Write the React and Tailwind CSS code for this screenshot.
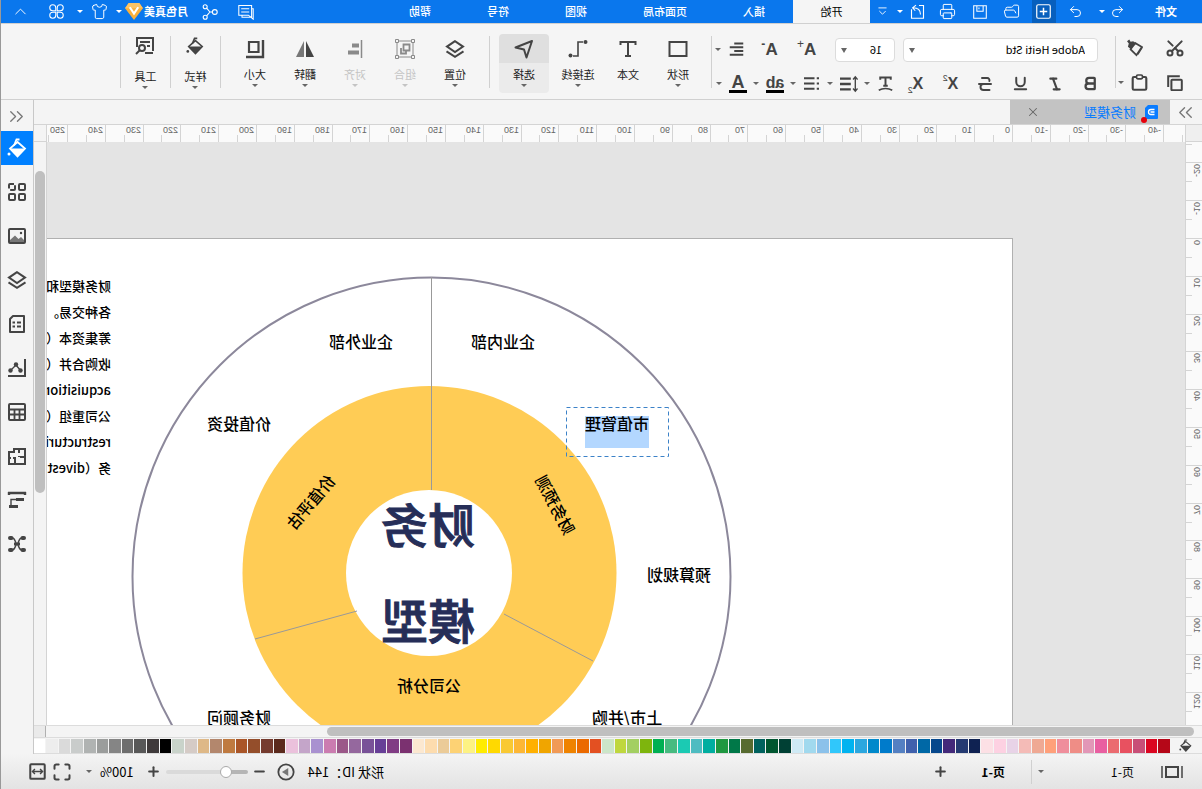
import React from 'react';
import {
    Bold,
    ChevronsLeft,
    ChevronsRight,
    ChevronUp,
    FolderOpen,
    Italic,
    Maximize,
    Minus,
    Plus,
    Printer,
    Redo2,
    Scissors,
    Shirt,
    Strikethrough,
    Underline,
    Undo2,
    X,
} from 'lucide-react';

const PALETTE = [
    '#b50718', '#db0620', '#c84f77', '#e85160', '#eb6b70', '#e95fa1', '#e297b7', '#ef8d86', '#ef8e9c', '#ffa07a',
    '#efa994', '#f4bbb7', '#e8d3e7', '#fdd1e2', '#fce0e5', '#0f2252', '#253a72', '#43297a', '#06478c', '#0068a6',
    '#4061ad', '#5480c2', '#007bcb', '#0089cb', '#2ba7df', '#00b3f0', '#30c7fb', '#8bc1ea', '#a1d9ee', '#cfeaf5',
    '#004034', '#005630', '#00625e', '#576b30', '#007848', '#1f9841', '#00aea0', '#4ebcc1', '#1bcab3', '#47bb80',
    '#00b053', '#7eb50d', '#a3cf62', '#bfd73e', '#cce6c9', '#e35022', '#eb6a00', '#ef8300', '#f19a56', '#f0a500',
    '#ffb000', '#fdb735', '#f9c933', '#ffd900', '#ffec00', '#fdf283', '#fdd274', '#ebcb98', '#fddcae', '#fce8d0',
    '#7b3170', '#803c84', '#673f97', '#795298', '#95689e', '#9b5889', '#cb7cb0', '#a991d0', '#c4a5c9', '#ebc1dc',
    '#5b2a1d', '#753b2f', '#944e2b', '#aa5628', '#bf7a40', '#b3876d', '#deb887', '#d5cbc6', '#c9d3ca', '#000000',
    '#3f3a3b', '#585858', '#6e6e6e', '#858585', '#9b9d9c', '#b0b3b2', '#c9cccb', '#dadada', '#ededed', '#ffffff',
];

const MENU = ['插入', '页面布局', '视图', '符号', '帮助'];

const NOTES = ['财务模型和', '各种交易。', '筹集资本（', '收购合并（', 'acquisition', '公司重组（', 'restructurin', '务（divest'];

const LABELS = [
    { text: '企业内部', x: 509, y: 109 },
    { text: '企业外部', x: 651, y: 109 },
    { text: '价值投资', x: 773, y: 191 },
    { text: '市值管理', x: 395, y: 191 },
    { text: '预算规划', x: 333, y: 342 },
    { text: '上市/并购', x: 385, y: 485 },
    { text: '财务顾问', x: 773, y: 485 },
    { text: '公司分析', x: 583, y: 453 },
];

// pixels per ruler unit
const RULER_SCALE = 3.78;

const Svg = ({ size = 20, className = '', children }) => (
    <svg width={size} height={size} viewBox="0 0 20 20" fill="none" stroke="currentColor" strokeWidth="2" className={className} aria-hidden="true">
        {children}
    </svg>
);

const Caret = ({ className = 'text-[#666]' }) => (
    <svg width="6" height="3" viewBox="0 0 6 3" className={`shrink-0 ${className}`} aria-hidden="true">
        <path d="M0 0h6L3 3z" fill="currentColor" />
    </svg>
);

const BucketIcon = ({ size }) => (
    <Svg size={size}>
        <path d="M9.5 4 2 10.5l7.5 8 7.5-8z" strokeWidth="1.8" />
        <path d="M2 10.5h15l-7.5 8z" fill="currentColor" stroke="none" />
        <path d="M7.5 1.5h3l2.5 6" strokeWidth="1.8" />
        <circle cx="18" cy="16" r="1.5" fill="currentColor" stroke="none" />
    </Svg>
);

const LayersIcon = () => (
    <Svg>
        <path d="M10 2.2 18 7.6 10 13 2 7.6z" />
        <path d="m1.5 12.4 8.5 5.4 8.5-5.4" />
    </Svg>
);

const SIDE_TOOLS = [
    { name: '样式', icon: <BucketIcon size={20} />, active: true },
    {
        name: '符号库',
        icon: (
            <Svg>
                <rect x="2" y="2" width="6" height="6" rx="1" />
                <rect x="12" y="2" width="6" height="6" rx="1" strokeDasharray="9 2" />
                <rect x="2" y="12" width="6" height="6" rx="1" />
                <rect x="12" y="12" width="6" height="6" rx="1" />
            </Svg>
        ),
    },
    {
        name: '图片',
        icon: (
            <Svg>
                <rect x="2" y="3" width="16" height="14" rx="1" />
                <path d="M3 16v-2l3-3 2.500 2L12 9.500l5 4.500v2z" fill="#777" stroke="none" />
                <circle cx="6" cy="7" r="1.200" fill="currentColor" stroke="none" />
            </Svg>
        ),
    },
    { name: '图层', icon: <LayersIcon /> },
    {
        name: '文档',
        icon: (
            <Svg>
                <path d="M3 2h11l3 3v13H3z" strokeLinejoin="round" />
                <path d="M6 8.500h4M12 8.500h2.500M6 12.500h4M12 12.500h2.500" />
            </Svg>
        ),
    },
    {
        name: '图表',
        icon: (
            <Svg>
                <path d="M2 1v17h17" />
                <path d="m6 13 5-6 6 6" strokeWidth="1.400" />
                <g fill="currentColor" stroke="none">
                    <circle cx="6.500" cy="12.500" r="2.200" />
                    <circle cx="11" cy="6.500" r="2.200" />
                    <circle cx="16.500" cy="12.500" r="2.200" />
                </g>
            </Svg>
        ),
    },
    {
        name: '表格',
        icon: (
            <Svg>
                <rect x="2" y="2" width="16" height="16" rx="1" />
                <path d="M2 7.500h16M2 12.500h16M7.500 7.500V18M12.500 7.500V18" strokeWidth="1.800" />
            </Svg>
        ),
    },
    {
        name: '平面图',
        icon: (
            <Svg>
                <path d="M2 3h11v3h5v12H2zM8 3v4M2 11h5M12 18v-6h2M8 10v1M16 12h2" />
            </Svg>
        ),
    },
    {
        name: '组织结构',
        icon: (
            <Svg>
                <path d="M1 3h18M2 2v3M18 2v3" strokeWidth="2.400" />
                <path d="M5 9.500h11v6" strokeWidth="1.400" />
                <path d="M3 9.500h8M9 16.500h9" strokeWidth="3" />
            </Svg>
        ),
    },
    {
        name: '思维导图',
        icon: (
            <Svg>
                <path d="M5 4c4 0 3 6 5 6s1-6 5-6M5 16c4 0 3-6 5-6s1 6 5 6" strokeWidth="1.400" />
                <path d="M3 4h1.500M15.500 4H17M3 16h1.500M15.500 16H17" strokeWidth="4" strokeLinecap="round" />
                <path d="M7 10h6" strokeWidth="3" />
            </Svg>
        ),
    },
];

const ARRANGE_TOOLS = [
    { name: '位置', icon: <LayersIcon /> },
    {
        name: '组合',
        disabled: true,
        icon: (
            <Svg>
                <g strokeWidth="1">
                    <path d="M2 2h16v16H2z" />
                    <path d="M.5.5h3v3h-3zM16.500.5h3v3h-3zM.5 16.500h3v3h-3zM16.500 16.500h3v3h-3z" fill="#f5f5f5" />
                </g>
                <path d="M5.500 5.500h6v6h-6zM14 9v5.500H9V12" strokeWidth="1.800" />
            </Svg>
        ),
    },
    {
        name: '对齐',
        disabled: true,
        icon: (
            <Svg>
                <path d="M3.500 1v18" strokeWidth="1.500" />
                <path d="M6 6.500h7M6 13.500h11" strokeWidth="4" />
            </Svg>
        ),
    },
    {
        name: '翻转',
        icon: (
            <Svg>
                <path d="M9 2v16H1z" fill="currentColor" stroke="none" />
                <path d="M11 2v16h8z" fill="#777" stroke="none" />
            </Svg>
        ),
    },
    {
        name: '大小',
        icon: (
            <Svg>
                <path d="M6.500 3h9.500v10H6.500z" strokeWidth="2.200" />
                <path d="M2 1v17h17" strokeWidth="2.400" />
            </Svg>
        ),
    },
];

const ToolButton = ({ name, icon, disabled = false, active = false, caret = true, low = false }) => (
    <button
        type="button"
        disabled={disabled}
        className={`flex h-[59px] shrink-0 flex-col items-center rounded-sm text-[#444] ${low ? 'w-[49px]' : 'w-[50px]'} ${active ? 'bg-[linear-gradient(#dfdfdf_29px,#ebebeb_29px)]' : ''}`}
    >
        <span className={`flex items-center justify-center ${low ? 'h-7' : 'h-[30px]'} ${disabled ? 'text-[#8a8a8a]' : ''}`}>{icon}</span>
        <span className={`leading-5 whitespace-nowrap ${low ? 'mt-1.5' : ''} ${disabled ? 'text-[#c4c4c4]' : 'text-[#222]'}`}>{name}</span>
        {caret ? <Caret className={disabled ? 'text-[#c4c4c4]' : 'text-[#666]'} /> : null}
    </button>
);

const Divider = () => <div className="h-[52px] w-px shrink-0 bg-[#d0d0d0]" />;

const IconButton = ({ label, className = 'w-[35px]', children }) => (
    <button type="button" aria-label={label} className={`flex h-6 shrink-0 items-center justify-center ${className}`}>
        {children}
    </button>
);

// icon with its own drop-down arrow
const SplitButton = ({ label, children }) => (
    <button type="button" aria-label={label} className="flex h-6 w-[37px] shrink-0 items-center">
        <span className="flex w-6 justify-center">{children}</span>
        <Caret className="ml-1 text-[#666]" />
    </button>
);

const SelectBox = ({ label, value, className }) => (
    <div className={`relative flex ${className}`}>
        <select
            aria-label={label}
            defaultValue={value}
            className="h-6 w-full appearance-none rounded-sm border border-[#dcdcdc] bg-white px-3 text-[11px] text-black"
        >
            <option>{value}</option>
        </select>
        <svg width="6" height="5" viewBox="0 0 6 5" className="pointer-events-none absolute top-[10px] right-[6px]" aria-hidden="true">
            <path d="M0 0h6L3 5z" fill="#666" />
        </svg>
    </div>
);

const TitleBar = () => (
    <header className="flex h-[23px] shrink-0 items-center bg-[#0a77ed] text-white">
        <button type="button" className="w-[72px] font-bold">文件</button>
        <IconButton label="撤销" className="w-6"><Undo2 size={15} strokeWidth={1.6} /></IconButton>
        <Caret className="mx-px text-white" />
        <IconButton label="重做" className="ml-2.5 w-6"><Redo2 size={15} strokeWidth={1.6} /></IconButton>
        <IconButton label="新建" className="ml-2 w-6 bg-[#075fbd]">
            <Svg size={15}>
                <rect x="1" y="1" width="18" height="18" rx="2" strokeWidth="1.600" />
                <path d="M10 5v10M5 10h10" />
            </Svg>
        </IconButton>
        <IconButton label="打开" className="ml-1 w-8"><FolderOpen size={17} strokeWidth={1.4} /></IconButton>
        <IconButton label="保存" className="w-8">
            <Svg size={14}>
                <path d="M1 1h18v18H1zM5.500 1v8h9V1M11.500 3.500V6" strokeWidth="1.500" />
            </Svg>
        </IconButton>
        <IconButton label="打印" className="w-8"><Printer size={17} strokeWidth={1.4} /></IconButton>
        <IconButton label="导出" className="w-7">
            <Svg size={15}>
                <path d="M8 2H2v17h16V7" strokeWidth="1.500" />
                <path d="M6 14c0-6 4-9 10-9M12 1.500 16.500 5 13 9" strokeWidth="1.500" />
            </Svg>
        </IconButton>
        <Caret className="mx-px text-white" />
        <IconButton label="更多" className="w-[26px]">
            <Svg size={9}>
                <path d="M1 2h18M3 9l7 7 7-7" />
            </Svg>
        </IconButton>
        <nav className="flex h-full">
            <button type="button" className="w-[77px] bg-[#f5f5f5] text-black">开始</button>
            {MENU.map((item) => (
                <button key={item} type="button" className="px-7 font-medium whitespace-nowrap">{item}</button>
            ))}
        </nav>
        <div className="ml-auto flex items-center">
            <IconButton label="评论" className="w-9">
                <Svg size={16}>
                    <path d="M3 2h16v12H7l-4 3zM3 6H1v13l3-2.500h11V14M6 6h10M6 10h10" strokeWidth="1.300" />
                </Svg>
            </IconButton>
            <IconButton label="分享" className="w-9">
                <Svg size={16}>
                    <g strokeWidth="1.400">
                        <circle cx="4" cy="10" r="3" />
                        <circle cx="16" cy="3.500" r="2.500" />
                        <circle cx="16" cy="16.500" r="2.500" />
                        <path d="M7 10h3l4-4.500M10 10l4 4.500" />
                    </g>
                </Svg>
            </IconButton>
            <button type="button" className="ml-1 flex items-center font-bold whitespace-nowrap">
                月色真美
                <svg width="20" height="19" viewBox="0 0 18 18" aria-hidden="true">
                    <path d="M4 1h10l3.500 5L9 17 .5 6z" fill="#fbb03b" />
                    <path d="M4 1h10l3.500 5H.5z" fill="#fdc465" />
                    <path d="m5 5 4 6 4-6" fill="none" stroke="#fff" strokeWidth="2" />
                </svg>
            </button>
            <Caret className="mr-1 ml-0.5 text-white" />
            <IconButton label="主题" className="mr-px w-6"><Shirt size={17} strokeWidth={1.4} /></IconButton>
            <Caret className="mx-1 text-white" />
            <IconButton label="应用" className="w-8">
                <Svg size={15}>
                    <g strokeWidth="1.400">
                        <path d="M9 9H5a4 4 0 1 1 4-4zM11 9V5a4 4 0 1 1 4 4zM9 11v4a4 4 0 1 1-4-4zM11 11h4a4 4 0 1 1-4 4z" />
                    </g>
                </Svg>
            </IconButton>
            <IconButton label="收起" className="w-10"><ChevronUp size={19} strokeWidth={1.2} /></IconButton>
        </div>
    </header>
);

const Ribbon = () => (
    <section className="flex h-[77px] shrink-0 items-center border-y border-[#d0d0d0] bg-[#f5f5f5] text-[#444]">
        <div className="grid w-[86px] shrink-0 grid-cols-[43px_37px] gap-y-[11px] pt-[7px] pl-[7px]">
            <IconButton label="剪切" className="w-10"><Scissors size={20} strokeWidth={2.4} className="-rotate-90" /></IconButton>
            <IconButton label="格式刷" className="ml-1 w-6">
                <Svg size={18}>
                    <path d="M3.500 9 11 4.500l5 7L9.500 18z" />
                    <path d="M3 9 8 17" strokeWidth="1.600" />
                    <path d="m10 5.500 3-3 3 .5 1.500-2.500 2.500 2-2 2.500 1 3.500-3 2.500z" fill="currentColor" stroke="none" />
                </Svg>
            </IconButton>
            <IconButton label="复制" className="w-10">
                <Svg size={16}>
                    <rect x="1.500" y="6" width="13" height="13" rx="1" strokeWidth="2.500" />
                    <path d="M4 1.500h14.500V15" strokeWidth="2.500" />
                </Svg>
            </IconButton>
            <SplitButton label="粘贴">
                <Svg size={17}>
                    <rect x="2" y="3.500" width="16" height="15" rx="1.500" strokeWidth="2.500" />
                    <rect x="6.500" y="1.200" width="7" height="4.500" rx="1.500" fill="#f5f5f5" />
                </Svg>
            </SplitButton>
        </div>
        <Divider />
        <div className="flex w-[403px] shrink-0 flex-col gap-2.5 pt-[10px] pl-[7px]">
            <div className="flex items-center">
                <SelectBox label="字体" value="Adobe Heiti Std" className="ml-[10px] w-[195px]" />
                <SelectBox label="字号" value="16" className="ml-2 w-[60px]" />
                <div className="ml-auto flex">
                    <IconButton label="增大字号" className="w-[37px] pr-1 text-[17px]">
                        <span className="font-['Liberation_Sans'] font-bold">A</span>
                        <span className="self-start font-['Liberation_Sans'] text-[12px] leading-3">+</span>
                    </IconButton>
                    <IconButton label="减小字号" className="w-[37px] pr-1 text-[17px]">
                        <span className="font-['Liberation_Sans'] font-bold">A</span>
                        <span className="self-start font-['Liberation_Sans'] text-[12px] leading-3 font-bold">-</span>
                    </IconButton>
                    <SplitButton label="对齐方式">
                        <Svg size={15}>
                            <path d="M1 2h12M1 7h18M1 12h12M1 17h18" strokeWidth="2.600" />
                        </Svg>
                    </SplitButton>
                </div>
            </div>
            <div className="flex items-center">
                <IconButton label="加粗"><Bold size={17} strokeWidth={3.200} /></IconButton>
                <IconButton label="斜体"><Italic size={16} strokeWidth={3.200} /></IconButton>
                <IconButton label="下划线"><Underline size={17} strokeWidth={2.800} /></IconButton>
                <IconButton label="删除线"><Strikethrough size={18} strokeWidth={2.600} /></IconButton>
                <IconButton label="上标">
                    <span className="font-['Liberation_Sans'] text-[16px] font-bold">X</span>
                    <span className="self-start font-['Liberation_Sans'] text-[9px] leading-3">2</span>
                </IconButton>
                <IconButton label="下标">
                    <span className="font-['Liberation_Sans'] text-[16px] font-bold">X</span>
                    <span className="self-end font-['Liberation_Sans'] text-[9px] leading-3">2</span>
                </IconButton>
                <SplitButton label="文字弧度">
                    <Svg size={15}>
                        <path d="M3 5V2h14v3M10 2v11M7 13h6" strokeWidth="2.600" />
                        <path d="M1 19c5-3 13-3 18 0" />
                    </Svg>
                </SplitButton>
                <SplitButton label="行距">
                    <Svg size={18}>
                        <path d="M3 2v16M.5 5 3 2l2.500 3M.5 15 3 18l2.500-3" strokeWidth="1.500" />
                        <path d="M8 4h12M8 10h12M8 16h12" strokeWidth="2.600" />
                    </Svg>
                </SplitButton>
                <SplitButton label="项目符号">
                    <Svg size={15}>
                        <path d="M0 3h3M0 10h3M0 17h3M6 3h14M6 10h14M6 17h14" strokeWidth="2.800" />
                    </Svg>
                </SplitButton>
                <SplitButton label="突出显示">
                    <span className="border-b-[3px] border-black font-['Liberation_Sans'] text-[16px] leading-[15px] font-bold">ab</span>
                </SplitButton>
                <SplitButton label="文字颜色">
                    <span className="w-[18px] border-b-[3px] border-black font-['Liberation_Sans'] text-[18px] leading-[15px] font-bold">A</span>
                </SplitButton>
            </div>
        </div>
        <Divider />
        <div className="flex pt-1 pr-[9px] pl-2">
            <ToolButton name="形状" icon={<Svg><rect x="1.500" y="3" width="17" height="14" /></Svg>} />
            <ToolButton name="文本" caret={false} icon={<Svg><path d="M2.500 6V3h15v3M10 3v14M7 17h6" /></Svg>} />
            <ToolButton
                name="连接线"
                icon={
                    <Svg>
                        <path d="M5 3h5v14h5" strokeWidth="1.600" />
                        <circle cx="2.500" cy="3" r="2" fill="currentColor" stroke="none" />
                        <circle cx="17.500" cy="16.500" r="2" fill="currentColor" stroke="none" />
                    </Svg>
                }
            />
            <div className="ml-1">
                <ToolButton name="选择" active icon={<Svg><path d="m2 2 16.500 6.500-8.500 2-2.500 8z" strokeLinejoin="round" /></Svg>} />
            </div>
        </div>
        <Divider />
        <div className="flex pt-1 pr-[9px] pl-[9px]">
            {ARRANGE_TOOLS.map((tool) => (
                <ToolButton key={tool.name} {...tool} />
            ))}
        </div>
        <Divider />
        <ToolButton name="样式" low icon={<BucketIcon size={18} />} />
        <Divider />
        <ToolButton
            name="工具"
            low
            icon={
                <Svg>
                    <path d="M2 15V2h16v9M2 17h8M5 6h10M5 10h3" />
                    <circle cx="13" cy="12" r="3" />
                    <path d="m15 14 4 4" />
                </Svg>
            }
        />
        <Divider />
    </section>
);

const TopRuler = () => {
    const marks = [];
    for (let value = -45; value <= 255; value += 5) marks.push(value);
    return (
        <svg className="block h-[17px] w-full bg-[#fafafa]" aria-hidden="true">
            {marks.map((value) => {
                const x = Math.round(172 + value * RULER_SCALE);
                const major = value % 10 === 0;
                return (
                    <g key={value}>
                        <path d={major ? `M${x}.5 0v17` : `M${x}.5 10v7`} stroke="#d4d4d4" />
                        {major ? <text x={x + 3} y="8" className="fill-[#666] font-['Liberation_Sans'] text-[9px]">{value}</text> : null}
                    </g>
                );
            })}
        </svg>
    );
};

const SideRuler = () => {
    const marks = [];
    for (let value = -25; value <= 125; value += 5) marks.push(value);
    return (
        <svg className="block h-full w-[17px] shrink-0 border-r border-[#d4d4d4] bg-[#fafafa]" aria-hidden="true">
            {marks.map((value) => {
                const y = Math.round(96 + value * RULER_SCALE);
                const major = value % 10 === 0;
                return (
                    <g key={value}>
                        <path d={major ? `M0 ${y}.5h17` : `M10 ${y}.5h7`} stroke="#d4d4d4" />
                        {major ? (
                            <text transform={`translate(8 ${y + 2}) rotate(-90)`} textAnchor="end" className="fill-[#666] font-['Liberation_Sans'] text-[9px]">
                                {value}
                            </text>
                        ) : null}
                    </g>
                );
            })}
        </svg>
    );
};

const Drawing = () => (
    <svg className="block h-full w-full">
        <circle cx="580.5" cy="337.5" r="299" fill="#fff" stroke="#8c889b" strokeWidth="2" />
        <circle cx="582.5" cy="334" r="187" fill="#ffcc55" />
        <circle cx="583" cy="334" r="83" fill="#fff" />
        <path d="M580.5 38v213M508 375l-89 47M655 372l102 28" fill="none" stroke="#999" />
        <rect x="363" y="177" width="64" height="32" fill="#b3d7ff" />
        <rect x="343.5" y="168.5" width="102" height="49" fill="none" stroke="#3c82c8" strokeDasharray="4 3" />
        <g textAnchor="middle" className="text-[16px] font-medium">
            {LABELS.map(({ text, x, y }) => (
                <text key={text} x={x} y={y}>{text}</text>
            ))}
            <text transform="translate(457 266) rotate(-62)" y="6">财务预测</text>
            <text transform="translate(701 263) rotate(50)" y="6">价值评估</text>
        </g>
        <g textAnchor="middle" className="fill-[#262e58] stroke-[#262e58] text-[47px] font-medium">
            <text x="584" y="304">财务</text>
            <text x="584" y="400">模型</text>
        </g>
        <g className="text-[13px] font-medium">
            {NOTES.map((line, i) => (
                <text key={line} x="901" y={52 + i * 26}>{line}</text>
            ))}
        </g>
    </svg>
);

const Workspace = () => (
    <main className="flex min-w-0 flex-1 flex-col">
        <div className="flex h-6 shrink-0 items-center">
            <IconButton label="展开" className="w-8 text-[#777]"><ChevronsRight size={23} strokeWidth={1.4} /></IconButton>
            <div className="flex h-full w-40 items-center bg-[#c3c3c3] pl-3">
                <span className="relative flex">
                    <svg width="13" height="14" viewBox="0 0 13 14" aria-hidden="true">
                        <path d="M1 0h9l3 3v11H1a1 1 0 0 1-1-1V1a1 1 0 0 1 1-1z" fill="#0a7cff" />
                        <path d="M3.500 4.500h3.500a2.500 2.500 0 0 1 0 5H3.500M3.500 7h4" fill="none" stroke="#fff" strokeWidth="1.300" />
                    </svg>
                    <span className="absolute -right-1 -bottom-1 size-[6px] rounded-full bg-red-600" />
                </span>
                <span className="ml-[9px] text-[13px] text-[#0a7cff]">财务模型</span>
                <button type="button" aria-label="关闭" className="mr-4 ml-auto text-[#666]"><X size={14} strokeWidth={1.8} /></button>
            </div>
        </div>
        <div className="flex h-[18px] shrink-0 border-t border-b border-[#d4d4d4]">
            <div className="w-[17px] shrink-0 border-r border-[#d4d4d4] bg-[#efefef]" />
            <div className="min-w-0 flex-1"><TopRuler /></div>
            <div className="w-[13px] shrink-0 border-l border-[#d4d4d4]" />
        </div>
        <div className="flex min-h-0 flex-1">
            <SideRuler />
            <div className="min-w-0 flex-1 overflow-hidden bg-[#e4e4e4] pt-24 pl-[172px]">
                <div className="h-full border-t border-l border-[#b0b0b0] bg-white">
                    <Drawing />
                </div>
            </div>
            <div className="w-[13px] shrink-0 border-l border-[#d4d4d4] px-px pt-[29px]">
                <div className="h-[322px] rounded-full bg-[#bfbfbf]" />
            </div>
        </div>
        <div className="flex h-[13px] shrink-0 border-y border-[#dcdcdc]">
            <div className="min-w-0 flex-1 py-px pr-[281px] pl-2">
                <div className="h-[9px] rounded-full bg-[#bfbfbf]" />
            </div>
            <div className="w-3 border-l border-[#b0b0b0] bg-[#eaeaea]" />
        </div>
        <div className="flex h-4 shrink-0 items-center border-b border-[#dcdcdc] text-[#444]">
            <span className="flex w-8 justify-center"><BucketIcon size={13} /></span>
            <div className="flex h-[14px] min-w-0 flex-1 gap-px">
                {PALETTE.map((color) => (
                    <button key={color} type="button" aria-label={color} className="h-full flex-1" style={{ backgroundColor: color }} />
                ))}
            </div>
        </div>
    </main>
);

const Sidebar = () => (
    <aside className="flex w-[33px] shrink-0 flex-col border-l border-[#c8c8c8]">
        <IconButton label="收起面板" className="mt-1 mb-[3px] w-full text-[#777]"><ChevronsLeft size={23} strokeWidth={1.4} /></IconButton>
        <div className="flex flex-col gap-[10px]">
            {SIDE_TOOLS.map(({ name, icon, active }) => (
                <button
                    key={name}
                    type="button"
                    aria-label={name}
                    className={`flex h-[34px] items-center justify-center ${active ? 'bg-[#0080ff] text-white' : 'text-[#444]'}`}
                >
                    {icon}
                </button>
            ))}
        </div>
    </aside>
);

const StatusBar = () => (
    <footer className="flex h-[35px] shrink-0 items-center bg-linear-to-b from-[#f4f4f4] to-[#e3e3e3] text-[12px] text-black">
        <IconButton label="页面预览" className="ml-[18px] w-6 text-[#444]">
            <svg width="22" height="12" viewBox="0 0 22 12" fill="none" stroke="currentColor" aria-hidden="true">
                <path d="M5 1h12v10H5z" strokeWidth="2" />
                <path d="M1 0v12M21 0v12" strokeWidth="1.500" />
            </svg>
        </IconButton>
        <button type="button" className="ml-[26px] flex w-[102px] items-center justify-between pr-1.5">
            页-1
            <Caret />
        </button>
        <div className="h-6 w-px bg-[#d0d0d0]" />
        <button type="button" className="ml-[26px] font-bold">页-1</button>
        <IconButton label="添加页" className="ml-[29px] w-6 text-[#444]"><Plus size={15} strokeWidth={3.200} /></IconButton>
        <div className="ml-auto flex items-center text-[13px] text-[#444]">
            <span className="mr-3 whitespace-nowrap text-black">形状 ID：144</span>
            <IconButton label="播放" className="w-5">
                <Svg size={18}>
                    <circle cx="10" cy="10" r="8.500" />
                    <path d="m7.500 5.500 7 4.500-7 4.500z" fill="#777" stroke="none" />
                </Svg>
            </IconButton>
            <IconButton label="缩小" className="ml-1 w-6"><Minus size={15} strokeWidth={3.200} /></IconButton>
            <input
                type="range"
                aria-label="缩放"
                defaultValue="23"
                className="h-1 w-[82px] appearance-none rounded-full bg-[linear-gradient(90deg,#b5b5b5_22px,#dadada_22px)] [&::-webkit-slider-thumb]:size-3 [&::-webkit-slider-thumb]:appearance-none [&::-webkit-slider-thumb]:rounded-full [&::-webkit-slider-thumb]:border [&::-webkit-slider-thumb]:border-[#aaa] [&::-webkit-slider-thumb]:bg-white"
            />
            <IconButton label="放大" className="w-6"><Plus size={15} strokeWidth={3.200} /></IconButton>
            <button type="button" className="ml-2 flex items-center gap-2 text-black">
                100%
                <Caret />
            </button>
            <IconButton label="全屏" className="ml-3 w-6"><Maximize size={20} strokeWidth={2.400} /></IconButton>
            <IconButton label="适应宽度" className="mr-[25px] w-6">
                <Svg size={17}>
                    <rect x="1.500" y="1.500" width="17" height="17" rx="1" strokeWidth="2.400" />
                    <path d="M4.500 10h11M7 7l-3 3 3 3M13 7l3 3-3 3" strokeWidth="1.600" />
                </Svg>
            </IconButton>
        </div>
    </footer>
);

const App = () => (
    <div className="flex h-screen -scale-x-100 flex-col overflow-hidden border-r border-[#999] bg-[#f4f4f4] font-['Noto_Sans_CJK_SC',sans-serif] text-[11px]">
        <TitleBar />
        <Ribbon />
        <div className="flex min-h-0 flex-1">
            <Workspace />
            <Sidebar />
        </div>
        <StatusBar />
    </div>
);

export default App;
